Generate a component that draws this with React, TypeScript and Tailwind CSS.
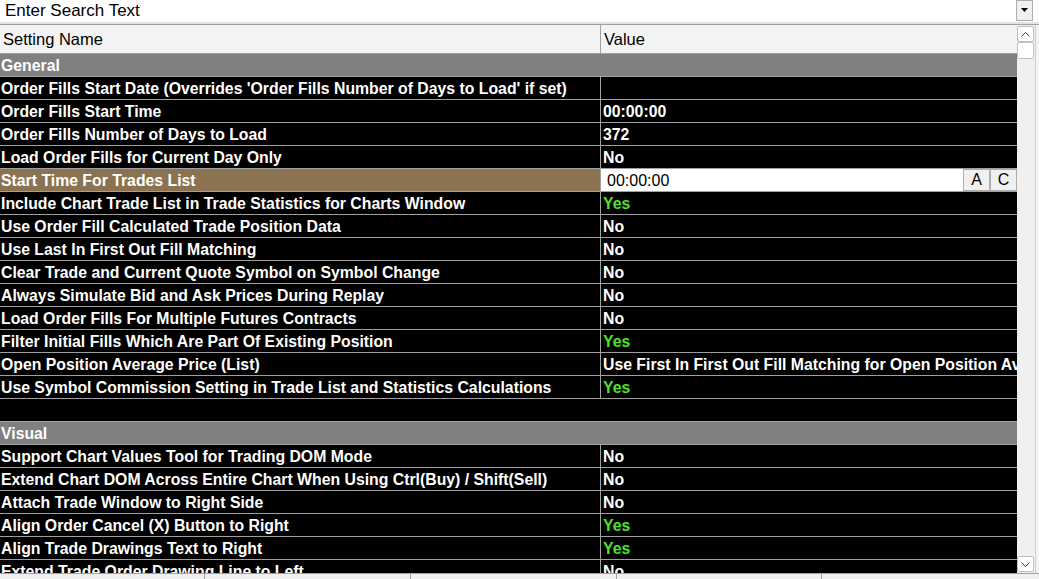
import React from 'react';

type Row =
  | { kind: 'group'; label: string }
  | { kind: 'blank' }
  | { kind: 'item'; name: string; value: string; yes?: boolean; edit?: boolean };

const rows: Row[] = [
  { kind: 'group', label: 'General' },
  { kind: 'item', name: "Order Fills Start Date (Overrides 'Order Fills Number of Days to Load' if set)", value: '' },
  { kind: 'item', name: 'Order Fills Start Time', value: '00:00:00' },
  { kind: 'item', name: 'Order Fills Number of Days to Load', value: '372' },
  { kind: 'item', name: 'Load Order Fills for Current Day Only', value: 'No' },
  { kind: 'item', name: 'Start Time For Trades List', value: '00:00:00', edit: true },
  { kind: 'item', name: 'Include Chart Trade List in Trade Statistics for Charts Window', value: 'Yes', yes: true },
  { kind: 'item', name: 'Use Order Fill Calculated Trade Position Data', value: 'No' },
  { kind: 'item', name: 'Use Last In First Out Fill Matching', value: 'No' },
  { kind: 'item', name: 'Clear Trade and Current Quote Symbol on Symbol Change', value: 'No' },
  { kind: 'item', name: 'Always Simulate Bid and Ask Prices During Replay', value: 'No' },
  { kind: 'item', name: 'Load Order Fills For Multiple Futures Contracts', value: 'No' },
  { kind: 'item', name: 'Filter Initial Fills Which Are Part Of Existing Position', value: 'Yes', yes: true },
  { kind: 'item', name: 'Open Position Average Price (List)', value: 'Use First In First Out Fill Matching for Open Position Average Price' },
  { kind: 'item', name: 'Use Symbol Commission Setting in Trade List and Statistics Calculations', value: 'Yes', yes: true },
  { kind: 'blank' },
  { kind: 'group', label: 'Visual' },
  { kind: 'item', name: 'Support Chart Values Tool for Trading DOM Mode', value: 'No' },
  { kind: 'item', name: 'Extend Chart DOM Across Entire Chart When Using Ctrl(Buy) / Shift(Sell)', value: 'No' },
  { kind: 'item', name: 'Attach Trade Window to Right Side', value: 'No' },
  { kind: 'item', name: 'Align Order Cancel (X) Button to Right', value: 'Yes', yes: true },
  { kind: 'item', name: 'Align Trade Drawings Text to Right', value: 'Yes', yes: true },
  { kind: 'item', name: 'Extend Trade Order Drawing Line to Left', value: 'No' },
];

const font = { fontFamily: '"Liberation Sans", Arial, sans-serif' };

function TableRow({ row }: { row: Row }) {
  if (row.kind === 'group') {
    return (
      <div className="h-[23px] bg-[#808080] border-b border-[#a0a0a0] flex items-center pl-[1px] pt-[1px] text-white font-bold text-[15.8px] shrink-0">
        {row.label}
      </div>
    );
  }
  if (row.kind === 'blank') {
    return <div className="h-[23px] bg-black border-b border-[#a0a0a0] shrink-0" />;
  }
  return (
    <div className="h-[23px] flex bg-black border-b border-[#a0a0a0] shrink-0">
      <div
        className={`w-[601px] shrink-0 border-r border-[#a0a0a0] flex items-center pl-[1px] pt-[1px] whitespace-nowrap overflow-hidden font-bold text-[15.8px] text-white ${
          row.edit ? 'bg-[#8b7352]' : ''
        }`}
      >
        {row.name}
      </div>
      {row.edit ? (
        <div className="flex-1 flex bg-white">
          <div className="flex-1 flex items-center pl-[6px] pt-[1px] text-[16px] text-black">{row.value}</div>
          <button className="w-[27px] bg-[#f0f0f0] border border-[#adadad] text-[16px] text-black flex items-center justify-center">A</button>
          <button className="w-[27px] bg-[#f0f0f0] border border-[#adadad] text-[16px] text-black flex items-center justify-center">C</button>
        </div>
      ) : (
        <div
          className={`flex-1 flex items-center pl-[2px] pt-[1px] whitespace-nowrap overflow-hidden font-bold text-[15.8px] ${
            row.yes ? 'text-[#4ee02c]' : 'text-white'
          }`}
        >
          {row.value}
        </div>
      )}
    </div>
  );
}

export default function App() {
  return (
    <div className="w-[1039px] h-[579px] bg-white overflow-hidden flex flex-col" style={font}>
      {/* search box */}
      <div className="h-[22px] flex shrink-0 bg-white">
        <div className="flex-1 flex items-center pl-[5px] text-[17px] text-black">Enter Search Text</div>
        <div className="w-[17px] h-[21px] mr-[6px] bg-[#f0f0f0] border border-[#adadad] flex items-center justify-center">
          <svg width="8" height="5" viewBox="0 0 8 5">
            <path d="M0 0 H7 L3.5 4 Z" fill="#000" />
          </svg>
        </div>
      </div>
      <div className="h-[2px] bg-[#e3e3e3] shrink-0" />

      <div className="flex-1 flex min-h-0 border-t border-[#a0a0a0]">
        {/* table */}
        <div className="w-[1017px] flex flex-col overflow-hidden">
          <div className="h-[29px] flex bg-[#f3f3f3] border-b border-[#a0a0a0] shrink-0 text-[16.5px] text-black">
            <div className="w-[601px] border-r border-[#a0a0a0] flex items-center pl-[3px]">Setting Name</div>
            <div className="flex-1 flex items-center pl-[3px]">Value</div>
          </div>
          {rows.map((r, i) => (
            <TableRow key={i} row={r} />
          ))}
        </div>
        {/* scrollbar */}
        <div className="w-[18px] bg-[#f0f0f0] flex flex-col items-start pt-[1px]">
          <div className="w-[17px] h-[16px] bg-white border border-[#c0c0c0] rounded-[2px] flex items-center justify-center">
            <svg width="9" height="5" viewBox="0 0 9 5">
              <path d="M0.5 4.5 L4.5 0.5 L8.5 4.5" fill="none" stroke="#404040" strokeWidth="1" />
            </svg>
          </div>
          <div className="w-[17px] h-[17px] bg-white border border-[#c0c0c0] rounded-[2px]" />
          <div className="flex-1" />
          <div className="w-[17px] h-[16px] bg-white border border-[#c0c0c0] rounded-[2px] flex items-center justify-center mb-[1px]">
            <svg width="9" height="5" viewBox="0 0 9 5">
              <path d="M0.5 0.5 L4.5 4.5 L8.5 0.5" fill="none" stroke="#404040" strokeWidth="1" />
            </svg>
          </div>
        </div>
        <div className="flex-1 bg-[#f3f3f3] border-l border-[#d0d0d0]" />
      </div>

      {/* status strip */}
      <div className="h-[6px] shrink-0 flex bg-[#f0f0f0] border-t border-[#a0a0a0]">
        <div className="w-[205px] border-r border-[#a0a0a0]" />
        <div className="w-[206px] border-r border-[#a0a0a0]" />
        <div className="w-[206px] border-r border-[#a0a0a0]" />
        <div className="w-[205px] border-r border-[#a0a0a0]" />
        <div className="flex-1" />
      </div>
    </div>
  );
}
